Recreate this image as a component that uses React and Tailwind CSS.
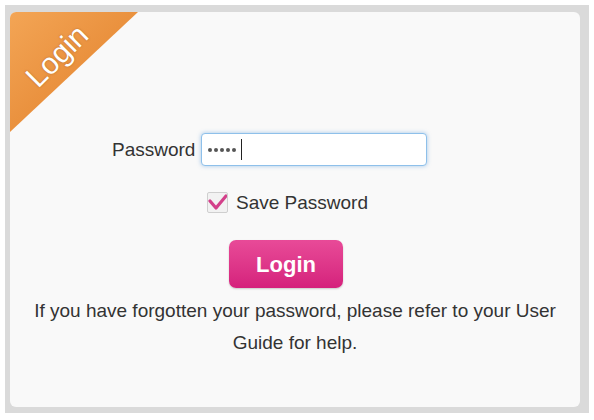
export default function App() {
  const font = { fontFamily: '"Liberation Sans", Arial, sans-serif' };
  return (
    <div className="w-[594px] h-[420px] bg-white p-[5px]" style={font}>
      <div className="w-[584px] h-[408px] bg-[#dadada] pl-[5px] pt-[7px]">
        <div className="relative w-[570px] h-[395px] bg-[#f9f9f9] rounded-[6px] flex flex-col text-[#333]">
          {/* corner ribbon */}
          <div className="absolute left-0 top-0 w-[128px] h-[120px] rounded-tl-[6px] bg-gradient-to-br from-[#f3a555] to-[#e07d22] [clip-path:polygon(0_0,100%_0,0_100%)]" />
          <div className="absolute left-[-3px] top-[29px] w-[100px] text-center text-white text-[30px] leading-none -rotate-45 [text-shadow:0_0_2px_rgba(120,60,0,0.5)]">
            Login
          </div>

          <div className="pt-[121px] pl-[102px] flex items-center">
            <span className="text-[19px] leading-none">Password</span>
            <div className="ml-[6px] w-[226px] h-[33px] bg-white border border-[#8ec0ea] rounded-[4px] shadow-[0_0_4px_rgba(80,150,220,0.5)] flex items-center pl-[6px]">
              <div className="flex gap-[2px]">
                <span className="w-[4px] h-[4px] rounded-full bg-[#555]" />
                <span className="w-[4px] h-[4px] rounded-full bg-[#555]" />
                <span className="w-[4px] h-[4px] rounded-full bg-[#555]" />
                <span className="w-[4px] h-[4px] rounded-full bg-[#555]" />
                <span className="w-[4px] h-[4px] rounded-full bg-[#555]" />
              </div>
              <span className="ml-[5px] w-px h-[21px] bg-[#222]" />
            </div>
          </div>

          <div className="mt-[26px] pl-[197px] flex items-center">
            <div className="w-[21px] h-[21px] border border-[#cfcfcf] bg-[#f2f2f2] rounded-[2px] flex items-center justify-center">
              <svg width="19" height="19" viewBox="0 0 19 19">
                <path d="M2 8 L8 15 L18 3" fill="none" stroke="#d3408a" strokeWidth="3.2" strokeLinejoin="round" strokeLinecap="round" />
              </svg>
            </div>
            <span className="ml-[8px] text-[19px] leading-none">Save Password</span>
          </div>

          <div className="mt-[27px] pl-[219px]">
            <div className="w-[114px] h-[48px] rounded-[7px] bg-gradient-to-b from-[#e84a98] to-[#d5207c] shadow-[0_1px_2px_rgba(0,0,0,0.2)] flex items-center justify-center text-white font-bold text-[22px]">
              Login
            </div>
          </div>

          <p className="mt-[7px] text-center text-[19px] leading-[32px] px-[10px]">
            If you have forgotten your password, please refer to your User Guide for help.
          </p>
        </div>
      </div>
    </div>
  );
}
